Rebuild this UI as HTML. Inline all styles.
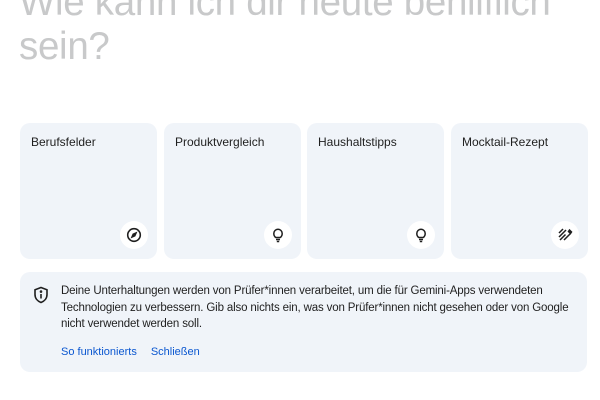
<!DOCTYPE html>
<html><head><meta charset="utf-8"><style>
*{margin:0;padding:0;box-sizing:border-box}
body{width:600px;height:400px;overflow:hidden;background:#fff;font-family:"Liberation Sans",sans-serif;position:relative}
h1{position:absolute;left:19px;top:-19px;font-size:38.5px;line-height:44px;font-weight:400;color:#c8c9ca;letter-spacing:-0.3px;white-space:nowrap}
.card{position:absolute;top:123px;width:137px;height:136px;background:#f0f4f9;border-radius:10px}
.card span{position:absolute;left:11px;top:12px;font-size:12px;color:#1f1f1f}
.ic{position:absolute;right:9px;bottom:10px;width:28px;height:28px;border-radius:50%;background:#fff;display:flex;align-items:center;justify-content:center}
.note{position:absolute;left:20px;top:272px;width:567px;height:100px;background:#f0f4f9;border-radius:10px}
.note p{position:absolute;left:41px;top:11px;width:520px;font-size:11.5px;line-height:16.5px;color:#1f1f1f;letter-spacing:-0.15px}
.links{position:absolute;left:41px;top:73px;font-size:11px;color:#0b57d0}
.links span{margin-right:14px}
</style></head><body>
<h1>Wie kann ich dir heute behilflich<br>sein?</h1>
<div class="card" style="left:20px"><span>Berufsfelder</span><div class="ic"><svg width="16" height="16" viewBox="0 0 16 16" fill="none" stroke="#1f1f1f" stroke-width="1.6"><circle cx="8" cy="8" r="6.3"/><path d="M10.5 5.5 L9 9 L5.5 10.5 L7 7 Z" fill="#1f1f1f" stroke-width="1"/></svg></div></div>
<div class="card" style="left:164px"><span>Produktvergleich</span><div class="ic"><svg width="16" height="16" viewBox="0 0 16 16" fill="none" stroke="#1f1f1f" stroke-width="1.5"><path d="M5.8 10.5 C4 9.3 3.8 7.6 3.8 6.5 A4.2 4.2 0 0 1 12.2 6.5 C12.2 7.6 12 9.3 10.2 10.5 Z"/><path d="M6 12.5 H10 M6.8 14.5 H9.2"/></svg></div></div>
<div class="card" style="left:307px"><span>Haushaltstipps</span><div class="ic"><svg width="16" height="16" viewBox="0 0 16 16" fill="none" stroke="#1f1f1f" stroke-width="1.5"><path d="M5.8 10.5 C4 9.3 3.8 7.6 3.8 6.5 A4.2 4.2 0 0 1 12.2 6.5 C12.2 7.6 12 9.3 10.2 10.5 Z"/><path d="M6 12.5 H10 M6.8 14.5 H9.2"/></svg></div></div>
<div class="card" style="left:451px"><span>Mocktail-Rezept</span><div class="ic"><svg width="16" height="16" viewBox="0 0 16 16" fill="none" stroke="#1f1f1f" stroke-width="1.5"><path d="M7 13 L13.5 6.5 M12.5 3 L14.5 5 L13.5 6.5 L11.5 4.5 Z" fill="#1f1f1f"/><path d="M2 6 L6 2 M2 10 L9 3 M3 13 L8.5 7.5"/></svg></div></div>
<div class="note">
<svg style="position:absolute;left:13px;top:14px" width="16" height="18" viewBox="0 0 16 18" fill="none" stroke="#1f1f1f" stroke-width="1.6"><path d="M8 1.5 L14 3.8 V8.5 C14 12.5 11.3 15.3 8 16.5 C4.7 15.3 2 12.5 2 8.5 V3.8 Z"/><path d="M8 8 V12.5"/><circle cx="8" cy="5.6" r="0.5" fill="#1f1f1f"/></svg>
<p>Deine Unterhaltungen werden von Prüfer*innen verarbeitet, um die für Gemini-Apps verwendeten Technologien zu verbessern. Gib also nichts ein, was von Prüfer*innen nicht gesehen oder von Google nicht verwendet werden soll.</p>
<div class="links" style="top:74px"><span>So funktionierts</span><span>Schließen</span></div>
</div>
</body></html>
